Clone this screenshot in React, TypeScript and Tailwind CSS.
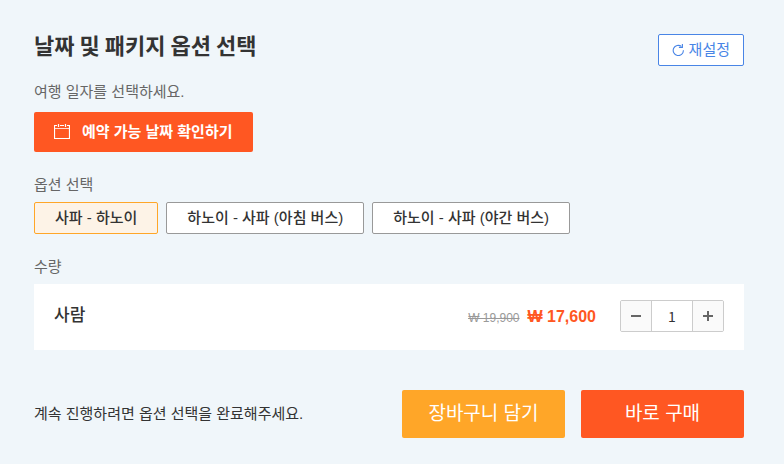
import { useState } from 'react'

const PACKAGES = ['사파 - 하노이', '하노이 - 사파 (아침 버스)', '하노이 - 사파 (야간 버스)']

export default function App() {
  const [selected, setSelected] = useState(PACKAGES[0])
  const [quantity, setQuantity] = useState(1)

  const handleReset = () => {
    setSelected(PACKAGES[0])
    setQuantity(1)
  }

  return (
    <main className="min-h-screen bg-[#f0f6fa] pt-[34px] pr-10 pb-[26px] pl-[34px] font-['Liberation_Sans','Noto_Sans_CJK_KR',sans-serif] text-[15px] leading-6 text-[#333]">
      <header className="flex items-start justify-between">
        <h1 className="font-['Noto_Sans_CJK_KR',sans-serif] text-[22px] leading-5 font-bold">
          날짜 및 패키지 옵션 선택
        </h1>
        <button
          type="button"
          onClick={handleReset}
          className="flex h-8 items-center gap-[5px] rounded-xs border border-[#4985e6] bg-white px-[13px] text-[#4985e6]"
        >
          <ResetIcon />
          재설정
        </button>
      </header>

      <section className="mt-[14px]">
        <h2 className="mb-2 text-[#666]">여행 일자를 선택하세요.</h2>
        <button
          type="button"
          className="flex h-10 items-center gap-3 rounded-xs bg-[#ff5722] px-5 font-bold text-white"
        >
          <CalendarIcon />
          예약 가능 날짜 확인하기
        </button>
      </section>

      <section className="mt-[21px]">
        <h2 className="mb-[5px] text-[#666]">옵션 선택</h2>
        <div className="flex flex-wrap gap-2">
          {PACKAGES.map((name) => (
            <button
              key={name}
              type="button"
              aria-pressed={selected === name}
              onClick={() => setSelected(name)}
              className={`h-8 rounded-xs border px-5 font-medium ${
                selected === name ? 'border-[#ffa628] bg-[#fdf3e7]' : 'border-[#999] bg-white'
              }`}
            >
              {name}
            </button>
          ))}
        </div>
      </section>

      <section className="mt-[21px]">
        <h2 className="mb-[5px] text-[#666]">수량</h2>
        <div className="flex items-center bg-white px-5 pt-4 pb-[18px]">
          <label htmlFor="people" className="flex-1 text-[17px] font-medium">
            사람
          </label>
          <p className="mr-6 flex items-baseline gap-2 pt-[2px]">
            <del className="text-xs text-[#999]">₩ 19,900</del>
            <strong className="text-base font-bold text-[#ff5722]">₩ 17,600</strong>
          </p>
          <div className="flex h-8 overflow-hidden rounded-xs border border-[#ccc]">
            <button
              type="button"
              aria-label="-"
              onClick={() => setQuantity(Math.max(0, quantity - 1))}
              className="flex w-[31px] items-center justify-center border-r border-[#ccc] bg-[#fafafa]"
            >
              <svg width="10" height="10" viewBox="0 0 10 10" fill="#666">
                <path d="M0 4h10v2H0z" />
              </svg>
            </button>
            <input
              id="people"
              type="text"
              inputMode="numeric"
              value={quantity}
              onChange={(e) => setQuantity(Number(e.target.value.replace(/\D/g, '')))}
              className="w-10 bg-white text-center font-['Noto_Sans_CJK_KR',sans-serif] text-sm outline-none"
            />
            <button
              type="button"
              aria-label="+"
              onClick={() => setQuantity(quantity + 1)}
              className="flex w-[31px] items-center justify-center border-l border-[#ccc] bg-[#fafafa]"
            >
              <svg width="10" height="10" viewBox="0 0 10 10" fill="#666">
                <path d="M0 4h4V0h2v4h4v2H6v4H4V6H0z" />
              </svg>
            </button>
          </div>
        </div>
      </section>

      <footer className="mt-10 flex items-center gap-4">
        <p className="flex-1">계속 진행하려면 옵션 선택을 완료해주세요.</p>
        <button type="button" className="h-12 w-[163px] rounded-xs bg-[#ffa628] text-[19px] text-white">
          장바구니 담기
        </button>
        <button type="button" className="h-12 w-[163px] rounded-xs bg-[#ff5722] text-[19px] text-white">
          바로 구매
        </button>
      </footer>
    </main>
  )
}

function ResetIcon() {
  return (
    <svg width="12" height="12" viewBox="0 0 12 12" fill="none" stroke="currentColor" strokeWidth="1.1">
      <path d="M11.4 6.3A5.1 5.1 0 1 1 9.4 2.4" />
      <path d="M6.9 3.4h3.5V0" />
    </svg>
  )
}

function CalendarIcon() {
  return (
    <svg width="16" height="16" viewBox="0 0 16 16" fill="none" stroke="currentColor">
      <path d="M3 1.5H.5v13h15v-13H13M6 1.5h4M4.5 0v3M11.5 0v3" strokeWidth="1.2" />
      <path d="M1 4.5h14" strokeOpacity="0.8" />
    </svg>
  )
}
